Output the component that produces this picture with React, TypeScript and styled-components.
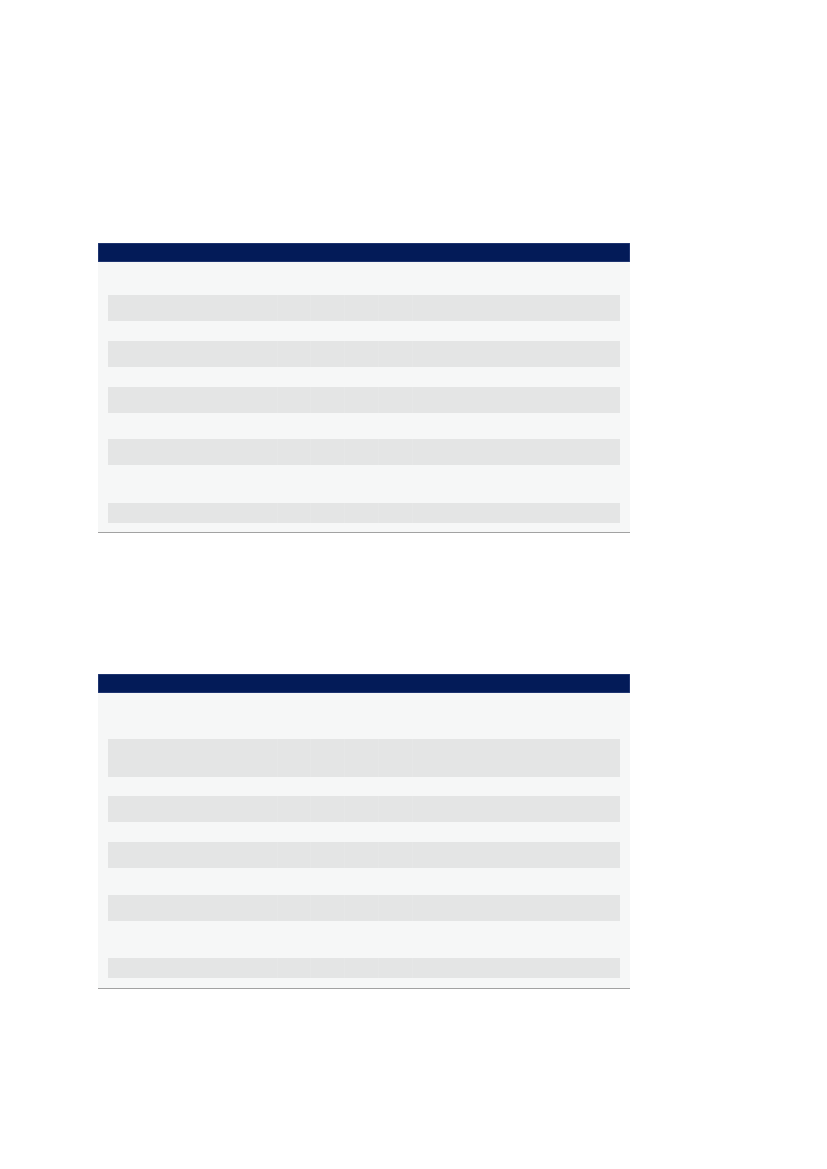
import React from 'react';
import styled, { createGlobalStyle } from 'styled-components';

const GlobalStyle = createGlobalStyle`
  html, body {
    margin: 0;
    padding: 0;
    background: #ffffff;
    font-family: "Liberation Sans", Arial, sans-serif;
  }
`;

type RowSpec = { gap: number; height: number };

// row gaps / heights read off the page, in px
const firstTable: RowSpec[] = [
  { gap: 33, height: 26 },
  { gap: 20, height: 26 },
  { gap: 20, height: 26 },
  { gap: 26, height: 26 },
  { gap: 38, height: 20 },
];

const secondTable: RowSpec[] = [
  { gap: 46, height: 38 },
  { gap: 19, height: 26 },
  { gap: 20, height: 26 },
  { gap: 27, height: 26 },
  { gap: 37, height: 20 },
];

const Page = styled.div`
  width: 827px;
  min-height: 1169px;
  box-sizing: border-box;
  padding: 243px 0 0 98px;
  display: flex;
  flex-direction: column;
  gap: 141px;
`;

const Table = styled.section`
  width: 532px;
  display: flex;
  flex-direction: column;
`;

const HeaderBar = styled.div`
  height: 19px;
  background: #031b58;
  box-shadow: inset 0 0 0 0.5px #3a4f85;
`;

const Body = styled.div<{ $bottom: number }>`
  background: #f6f7f7;
  padding: 0 10px ${(p) => p.$bottom}px;
  border-bottom: 1px solid #a2a2a2;
  display: flex;
  flex-direction: column;
`;

const Row = styled.div<{ $gap: number; $height: number }>`
  margin-top: ${(p) => p.$gap}px;
  height: ${(p) => p.$height}px;
  background: #e4e5e5;
  display: grid;
  grid-template-columns: 169px 33px 34px 34px 34px 1fr;
`;

const Cell = styled.div`
  & + & {
    border-left: 1px solid rgba(255, 255, 255, 0.1);
  }
`;

function DataTable({ rows, bottom }: { rows: RowSpec[]; bottom: number }) {
  return (
    <Table>
      <HeaderBar />
      <Body $bottom={bottom}>
        {rows.map((r, i) => (
          <Row key={i} $gap={r.gap} $height={r.height}>
            {Array.from({ length: 6 }).map((_, c) => (
              <Cell key={c} />
            ))}
          </Row>
        ))}
      </Body>
    </Table>
  );
}

export default function App() {
  return (
    <>
      <GlobalStyle />
      <Page>
        <DataTable rows={firstTable} bottom={9} />
        <DataTable rows={secondTable} bottom={10} />
      </Page>
    </>
  );
}
